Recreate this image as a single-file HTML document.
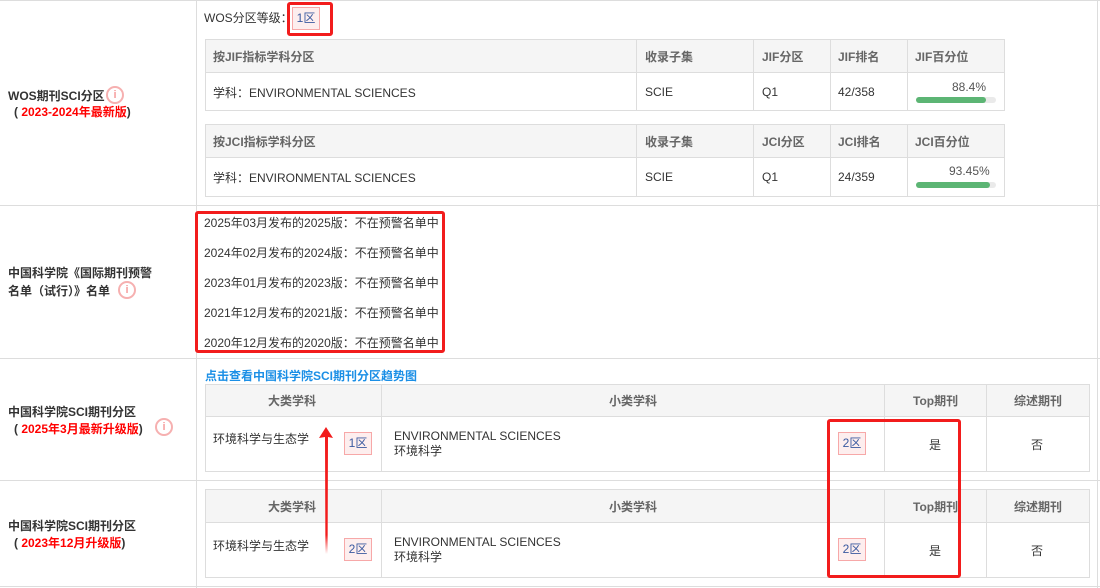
<!DOCTYPE html>
<html><head><meta charset="utf-8"><style>
*{margin:0;padding:0;box-sizing:border-box}
body{width:1100px;height:588px;background:#fff;position:relative;overflow:hidden;font-family:"Liberation Sans","Noto Sans CJK SC",sans-serif;font-size:12px;color:#333}
.a{position:absolute}
.hl{position:absolute;height:1px;background:#ddd}
.vl{position:absolute;width:1px;background:#ddd}
.hd{position:absolute;background:#f5f5f5}
.t{position:absolute;white-space:nowrap;line-height:14px}
.b{font-weight:bold}
.red{color:#f00;font-weight:bold}
.g{color:#666}
.tag{position:absolute;border:1px solid #f7a8a8;background:#fdeeee;color:#3a5aa0;font-size:12px;line-height:20px;text-align:center;width:28px;height:23px}
.box{position:absolute;border:3px solid #f21c1c;border-radius:3px}
.info{position:absolute;width:18px;height:18px;border:2px solid #f6b0b0;border-radius:50%;color:#f6a0a0;font-size:11px;text-align:center;line-height:14px;font-weight:bold}
.bar{position:absolute;height:6px;background:#eaeaea;border-radius:3px;width:80px}
.bar i{display:block;height:6px;background:#5cb574;border-radius:3px}
</style></head><body>
<div class="hl" style="left:0;top:0;width:1100px"></div>
<div class="hl" style="left:0;top:205px;width:1100px"></div>
<div class="hl" style="left:0;top:358px;width:1100px"></div>
<div class="hl" style="left:0;top:480px;width:1100px"></div>
<div class="hl" style="left:0;top:586px;width:1100px"></div>
<div class="vl" style="left:196px;top:0;height:588px"></div>
<div class="vl" style="left:1097px;top:0;height:588px"></div>

<div class="t b" style="left:8px;top:89px">WOS期刊SCI分区</div>
<div class="info" style="left:106px;top:86px">i</div>
<div class="t b" style="left:14px;top:105px">(<span class="red"> 2023-2024年最新版</span>)</div>
<div class="t" style="left:204px;top:11px">WOS分区等级：</div>
<div class="tag" style="left:292px;top:7px">1区</div>
<div class="box" style="left:287px;top:2px;width:46px;height:34px"></div>

<div class="hd" style="left:205px;top:39px;width:800px;height:33px"></div>
<div class="hl" style="left:205px;top:39px;width:800px"></div>
<div class="hl" style="left:205px;top:72px;width:800px"></div>
<div class="hl" style="left:205px;top:110px;width:800px"></div>
<div class="vl" style="left:205px;top:39px;height:72px"></div>
<div class="vl" style="left:636px;top:39px;height:72px"></div>
<div class="vl" style="left:753px;top:39px;height:72px"></div>
<div class="vl" style="left:830px;top:39px;height:72px"></div>
<div class="vl" style="left:907px;top:39px;height:72px"></div>
<div class="vl" style="left:1004px;top:39px;height:72px"></div>
<div class="t b g" style="left:213px;top:50px">按JIF指标学科分区</div>
<div class="t b g" style="left:645px;top:50px">收录子集</div>
<div class="t b g" style="left:762px;top:50px">JIF分区</div>
<div class="t b g" style="left:838px;top:50px">JIF排名</div>
<div class="t b g" style="left:915px;top:50px">JIF百分位</div>
<div class="t" style="left:213px;top:86px">学科：ENVIRONMENTAL SCIENCES</div>
<div class="t" style="left:645px;top:85px">SCIE</div>
<div class="t" style="left:762px;top:85px">Q1</div>
<div class="t" style="left:838px;top:85px">42/358</div>
<div class="t" style="left:952px;top:80px;color:#555">88.4%</div>
<div class="bar" style="left:916px;top:97px"><i style="width:70px"></i></div>

<div class="hd" style="left:205px;top:124px;width:800px;height:33px"></div>
<div class="hl" style="left:205px;top:124px;width:800px"></div>
<div class="hl" style="left:205px;top:157px;width:800px"></div>
<div class="hl" style="left:205px;top:196px;width:800px"></div>
<div class="vl" style="left:205px;top:124px;height:73px"></div>
<div class="vl" style="left:636px;top:124px;height:73px"></div>
<div class="vl" style="left:753px;top:124px;height:73px"></div>
<div class="vl" style="left:830px;top:124px;height:73px"></div>
<div class="vl" style="left:907px;top:124px;height:73px"></div>
<div class="vl" style="left:1004px;top:124px;height:73px"></div>
<div class="t b g" style="left:213px;top:135px">按JCI指标学科分区</div>
<div class="t b g" style="left:645px;top:135px">收录子集</div>
<div class="t b g" style="left:762px;top:135px">JCI分区</div>
<div class="t b g" style="left:838px;top:135px">JCI排名</div>
<div class="t b g" style="left:915px;top:135px">JCI百分位</div>
<div class="t" style="left:213px;top:171px">学科：ENVIRONMENTAL SCIENCES</div>
<div class="t" style="left:645px;top:170px">SCIE</div>
<div class="t" style="left:762px;top:170px">Q1</div>
<div class="t" style="left:838px;top:170px">24/359</div>
<div class="t" style="left:949px;top:164px;color:#555">93.45%</div>
<div class="bar" style="left:916px;top:182px"><i style="width:74px"></i></div>

<div class="t b" style="left:8px;top:266px">中国科学院《国际期刊预警</div>
<div class="t b" style="left:8px;top:284px">名单（试行）》名单</div>
<div class="info" style="left:118px;top:281px">i</div>
<div class="t" style="left:204px;top:216px">2025年03月发布的2025版：不在预警名单中</div>
<div class="t" style="left:204px;top:246px">2024年02月发布的2024版：不在预警名单中</div>
<div class="t" style="left:204px;top:276px">2023年01月发布的2023版：不在预警名单中</div>
<div class="t" style="left:204px;top:306px">2021年12月发布的2021版：不在预警名单中</div>
<div class="t" style="left:204px;top:336px">2020年12月发布的2020版：不在预警名单中</div>
<div class="box" style="left:195px;top:211px;width:250px;height:142px"></div>

<div class="t b" style="left:8px;top:405px">中国科学院SCI期刊分区</div>
<div class="t b" style="left:14px;top:422px">(<span class="red"> 2025年3月最新升级版</span>)</div>
<div class="info" style="left:155px;top:418px">i</div>
<div class="t b" style="left:205px;top:369px;color:#1b8fe6">点击查看中国科学院SCI期刊分区趋势图</div>

<div class="hd" style="left:205px;top:384px;width:884px;height:32px"></div>
<div class="hl" style="left:205px;top:384px;width:884px"></div>
<div class="hl" style="left:205px;top:416px;width:884px"></div>
<div class="hl" style="left:205px;top:471px;width:884px"></div>
<div class="vl" style="left:205px;top:384px;height:88px"></div>
<div class="vl" style="left:381px;top:384px;height:88px"></div>
<div class="vl" style="left:884px;top:384px;height:88px"></div>
<div class="vl" style="left:986px;top:384px;height:88px"></div>
<div class="vl" style="left:1089px;top:384px;height:88px"></div>
<div class="t b g" style="left:268px;top:394px">大类学科</div>
<div class="t b g" style="left:609px;top:394px">小类学科</div>
<div class="t b g" style="left:913px;top:394px">Top期刊</div>
<div class="t b g" style="left:1014px;top:394px">综述期刊</div>
<div class="t" style="left:213px;top:432px">环境科学与生态学</div>
<div class="tag" style="left:344px;top:432px">1区</div>
<div class="t" style="left:394px;top:429px">ENVIRONMENTAL SCIENCES</div>
<div class="t" style="left:394px;top:444px">环境科学</div>
<div class="tag" style="left:838px;top:432px">2区</div>
<div class="t" style="left:929px;top:438px">是</div>
<div class="t" style="left:1031px;top:438px">否</div>

<div class="t b" style="left:8px;top:519px">中国科学院SCI期刊分区</div>
<div class="t b" style="left:14px;top:536px">(<span class="red"> 2023年12月升级版</span>)</div>
<div class="hd" style="left:205px;top:489px;width:884px;height:33px"></div>
<div class="hl" style="left:205px;top:489px;width:884px"></div>
<div class="hl" style="left:205px;top:522px;width:884px"></div>
<div class="hl" style="left:205px;top:577px;width:884px"></div>
<div class="vl" style="left:205px;top:489px;height:89px"></div>
<div class="vl" style="left:381px;top:489px;height:89px"></div>
<div class="vl" style="left:884px;top:489px;height:89px"></div>
<div class="vl" style="left:986px;top:489px;height:89px"></div>
<div class="vl" style="left:1089px;top:489px;height:89px"></div>
<div class="t b g" style="left:268px;top:500px">大类学科</div>
<div class="t b g" style="left:609px;top:500px">小类学科</div>
<div class="t b g" style="left:913px;top:500px">Top期刊</div>
<div class="t b g" style="left:1014px;top:500px">综述期刊</div>
<div class="t" style="left:213px;top:539px">环境科学与生态学</div>
<div class="tag" style="left:344px;top:538px">2区</div>
<div class="t" style="left:394px;top:535px">ENVIRONMENTAL SCIENCES</div>
<div class="t" style="left:394px;top:550px">环境科学</div>
<div class="tag" style="left:838px;top:538px">2区</div>
<div class="t" style="left:929px;top:544px">是</div>
<div class="t" style="left:1031px;top:544px">否</div>

<div class="box" style="left:827px;top:419px;width:134px;height:159px"></div>

<svg class="a" style="left:316px;top:424px" width="22" height="134" viewBox="0 0 22 134">
<defs><linearGradient id="g" x1="0" y1="0" x2="0" y2="1"><stop offset="0" stop-color="#f21c1c"/><stop offset="0.85" stop-color="#f21c1c"/><stop offset="1" stop-color="#f21c1c" stop-opacity="0"/></linearGradient></defs>
<path d="M10 3 L17 14 L12 13 L11.6 130 L9.4 130 L9 13 L3 14 Z" fill="url(#g)"/>
</svg>
</body></html>
